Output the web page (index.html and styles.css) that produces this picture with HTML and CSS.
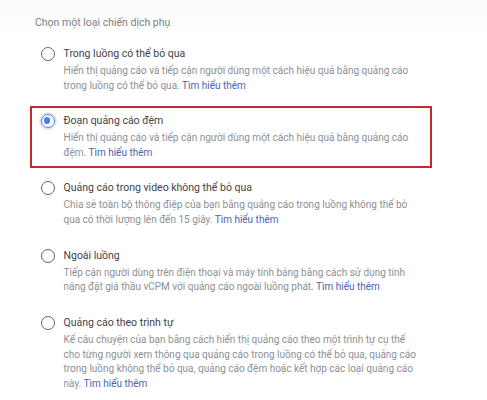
FILE: index.html
```html
<!DOCTYPE html>
<html lang="vi">
<head>
<meta charset="utf-8">
<link rel="stylesheet" href="styles.css">
</head>
<body>
<div class="page">
  <div class="heading">Chọn một loại chiến dịch phụ</div>
  <div class="list">
    <div class="item">
      <span class="radio"></span>
      <div class="body">
        <div class="title">Trong luồng có thể bỏ qua</div>
        <div class="desc">Hiển thị quảng cáo và tiếp cận người dùng một cách hiệu quả bằng quảng cáo trong luồng có thể bỏ qua. <span class="link">Tìm hiểu thêm</span></div>
      </div>
    </div>
    <div class="item highlight">
      <span class="radio checked"></span>
      <div class="body">
        <div class="title">Đoạn quảng cáo đệm</div>
        <div class="desc">Hiển thị quảng cáo và tiếp cận người dùng một cách hiệu quả bằng quảng cáo đệm. <span class="link">Tìm hiểu thêm</span></div>
      </div>
    </div>
    <div class="item">
      <span class="radio"></span>
      <div class="body">
        <div class="title">Quảng cáo trong video không thể bỏ qua</div>
        <div class="desc">Chia sẻ toàn bộ thông điệp của bạn bằng quảng cáo trong luồng không thể bỏ qua có thời lượng lên đến 15 giây. <span class="link">Tìm hiểu thêm</span></div>
      </div>
    </div>
    <div class="item">
      <span class="radio"></span>
      <div class="body">
        <div class="title">Ngoài luồng</div>
        <div class="desc">Tiếp cận người dùng trên điện thoại và máy tính bảng bằng cách sử dụng tính năng đặt giá thầu vCPM với quảng cáo ngoài luồng phát. <span class="link">Tìm hiểu thêm</span></div>
      </div>
    </div>
    <div class="item">
      <span class="radio"></span>
      <div class="body">
        <div class="title">Quảng cáo theo trình tự</div>
        <div class="desc">Kể câu chuyện của bạn bằng cách hiển thị quảng cáo theo một trình tự cụ thể cho từng người xem thông qua quảng cáo trong luồng có thể bỏ qua, quảng cáo trong luồng không thể bỏ qua, quảng cáo đệm hoặc kết hợp các loại quảng cáo này. <span class="link">Tìm hiểu thêm</span></div>
      </div>
    </div>
  </div>
</div>
</body>
</html>
```
FILE: styles.css
```css
html, body {
  margin: 0;
  padding: 0;
  background: #ffffff;
}
body {
  font-family: Roboto, "Noto Sans", Arial, sans-serif;
  width: 487px;
  height: 400px;
  overflow: hidden;
}
.page {
  padding: 15px 0 0 35px;
  background: linear-gradient(#fbfbf9 0, #ffffff 40px);
}
.heading {
  font-size: 10.5px;
  line-height: 16px;
  color: #7d7f82;
}
.list {
  display: flex;
  flex-direction: column;
  gap: 5.8px;
  margin-top: 8px;
  margin-left: -5px;
  width: 402px;
}
.item {
  box-sizing: border-box;
  display: flex;
  gap: 9px;
  border: 2.5px solid transparent;
  padding: 5px 8px 5px 8.5px;
}
.item.highlight {
  border-color: #c4282d;
}
.radio {
  box-sizing: border-box;
  flex: none;
  width: 14px;
  height: 14px;
  margin-top: 1px;
  border: 1.8px solid #5f6368;
  border-radius: 50%;
}
.radio.checked {
  border-color: #4a80e8;
  box-shadow: 0 0 0 2px #e3e5e8;
  position: relative;
}
.radio.checked::after {
  content: "";
  position: absolute;
  left: 2px;
  top: 2px;
  width: 6.4px;
  height: 6.4px;
  border-radius: 50%;
  background: #4a80e8;
}
.body {
  flex: 1;
  min-width: 0;
}
.title {
  font-size: 10.5px;
  line-height: 16px;
  color: #3f4246;
}
.desc {
  margin-top: 2px;
  font-size: 10px;
  line-height: 14.7px;
  color: #8d9094;
}
.link {
  color: #4b65a8;
}
```
